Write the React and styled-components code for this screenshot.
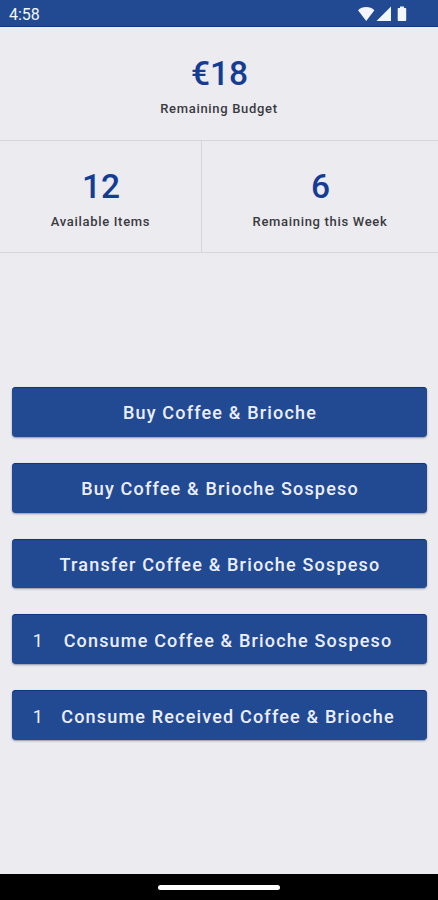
import React from "react";
import styled, { createGlobalStyle } from "styled-components";

const colors = {
  primary: "#214a93",
  primaryDark: "#123687",
  accent: "#143c93",
  background: "#ebebf0",
  divider: "#d5d5da",
  text: "#3a3a3f",
  onPrimary: "#eceefb",
};

const GlobalStyle = createGlobalStyle`
  body {
    margin: 0;
    background: ${colors.background};
  }
  * {
    box-sizing: border-box;
  }
`;

const Screen = styled.div`
  display: flex;
  flex-direction: column;
  height: 900px;
  font-family: Roboto, "Liberation Sans", sans-serif;
  background: ${colors.background};
`;

const StatusBar = styled.header`
  display: flex;
  align-items: center;
  justify-content: space-between;
  height: 27px;
  padding: 2px 29px 0 9px;
  background: ${colors.primary};
  border-bottom: 1px solid ${colors.primaryDark};
  color: #f4f6fd;
`;

const Clock = styled.span`
  padding-top: 1px;
  font-size: 16px;
  line-height: 20px;
`;

const Content = styled.main`
  flex: 1;
`;

const StatRow = styled.section`
  display: flex;
  height: ${(props) => props.$height}px;
  border-bottom: 1px solid ${colors.divider};
`;

const StatCell = styled.div`
  display: flex;
  flex-direction: column;
  align-items: center;
  width: ${(props) => props.$width || "100%"};
  padding-top: ${(props) => props.$top}px;

  & + & {
    flex: 1;
    border-left: 1px solid ${colors.divider};
  }
`;

const StatValue = styled.span`
  padding-left: 1px;
  font-size: 33.5px;
  font-weight: 500;
  line-height: 40px;
  color: ${colors.accent};
`;

const StatLabel = styled.span`
  margin-top: 7px;
  font-size: 13px;
  font-weight: 500;
  line-height: 16px;
  letter-spacing: 0.68px;
  color: ${colors.text};
`;

const Actions = styled.div`
  display: flex;
  flex-direction: column;
  gap: 26px;
  padding: 134px 11px 0 12px;
`;

const ActionButton = styled.button`
  display: flex;
  align-items: center;
  height: 49.8px;
  padding: 2px ${(props) => (props.$counted ? 24 : 11)}px 0 12px;
  border: 0;
  border-radius: 4px;
  background: ${colors.primary};
  box-shadow: inset 0 1px 0 ${colors.primaryDark}, 0 1px 2px rgba(30, 40, 80, 0.45);
  color: ${colors.onPrimary};
  font-family: inherit;
  font-size: 18px;
  font-weight: 500;
  letter-spacing: 1.18px;
  white-space: nowrap;
`;

const Count = styled.span`
  width: 29px;
  text-align: center;
  font-weight: 400;
`;

const Title = styled.span`
  flex: 1;
  text-align: center;
`;

const NavigationBar = styled.footer`
  display: flex;
  align-items: center;
  justify-content: center;
  height: 26px;
  background: #000;
`;

const Handle = styled.div`
  width: 122px;
  height: 5px;
  border-radius: 3px;
  background: #fff;
`;

const StatusIcons = () => (
  <svg width="52" height="18" viewBox="0 0 52 18" fill="currentColor">
    <path d="M1 5.2C3.3 3.1 6 2 9.2 2s5.9 1.1 8.2 3.2L9.2 16z" />
    <path d="M34 1.5V16H19.5z" />
    <path d="M43 1.5h4V3h1.200c.6 0 1 .4 1 1v11c0 .6-.4 1-1 1h-6.500c-.6 0-1-.4-1-1V4c0-.6.4-1 1-1H43z" />
  </svg>
);

const Stat = ({ value, label, width, top = 26 }) => (
  <StatCell $width={width} $top={top}>
    <StatValue>{value}</StatValue>
    <StatLabel>{label}</StatLabel>
  </StatCell>
);

const actions = [
  { title: "Buy Coffee & Brioche" },
  { title: "Buy Coffee & Brioche Sospeso" },
  { title: "Transfer Coffee & Brioche Sospeso" },
  { title: "Consume Coffee & Brioche Sospeso", count: 1 },
  { title: "Consume Received Coffee & Brioche", count: 1 },
];

const App = () => {
  return (
    <Screen>
      <GlobalStyle />
      <StatusBar>
        <Clock>4:58</Clock>
        <StatusIcons />
      </StatusBar>
      <Content>
        <StatRow $height={114}>
          <Stat value="€18" label="Remaining Budget" top={27} />
        </StatRow>
        <StatRow $height={112}>
          <Stat value="12" label="Available Items" width="201px" />
          <Stat value="6" label="Remaining this Week" />
        </StatRow>
        <Actions>
          {actions.map((action) => (
            <ActionButton key={action.title} type="button" $counted={!!action.count}>
              {action.count && <Count>{action.count}</Count>}
              <Title>{action.title}</Title>
            </ActionButton>
          ))}
        </Actions>
      </Content>
      <NavigationBar>
        <Handle />
      </NavigationBar>
    </Screen>
  );
};

export default App;
